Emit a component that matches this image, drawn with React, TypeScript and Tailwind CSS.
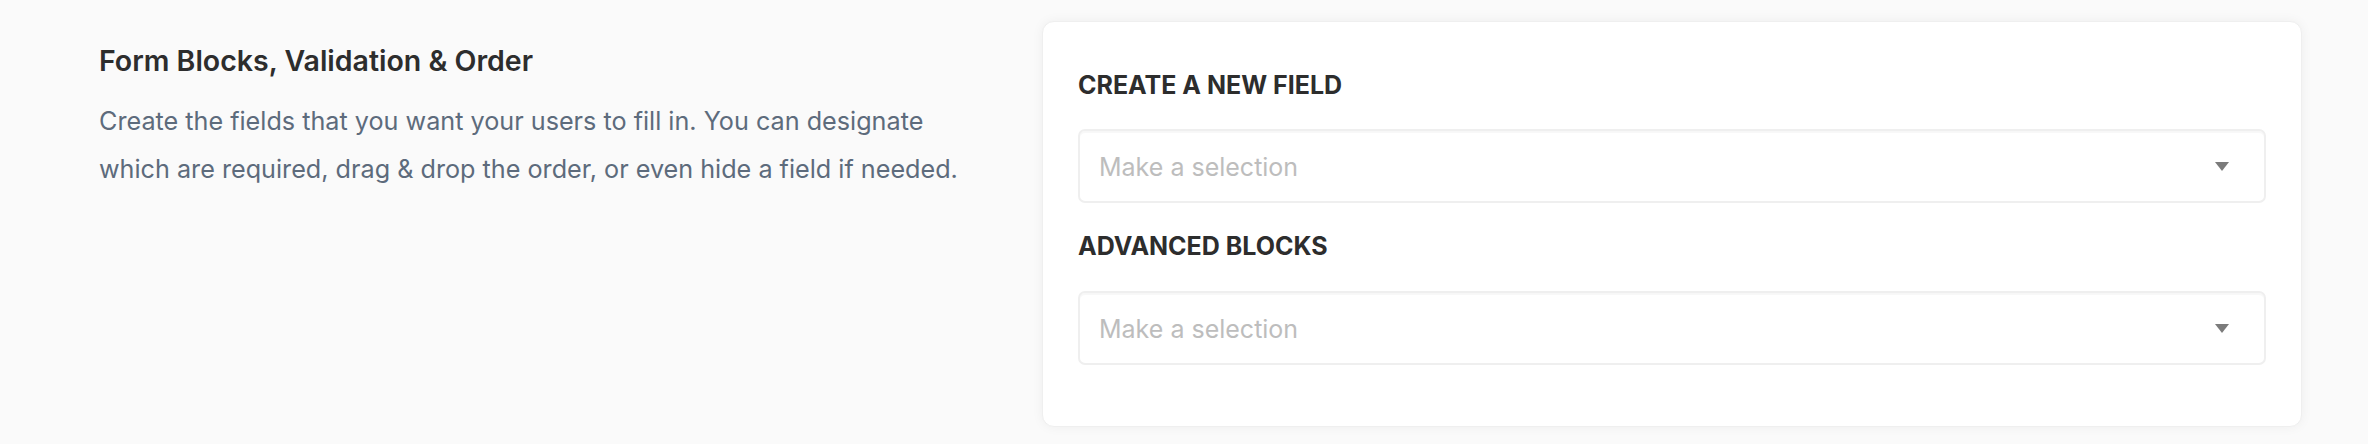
import React from "react"

const font = { fontFamily: "Inter, 'Noto Sans', sans-serif" }

function SelectBox({ placeholder }: { placeholder: string }) {
  return (
    <div className="flex h-[74px] items-center justify-between rounded-[7px] border-2 border-[#efefef] bg-white pl-[19px] pr-[35px] shadow-[inset_0_2px_1px_rgba(0,0,0,0.03)]">
      <span className="pt-[4px] text-[25px] text-[#bdbdbd]">{placeholder}</span>
      {/* Caret */}
      <svg width="14" height="9" viewBox="0 0 14 9">
        <path d="M0 0H14L7 9Z" fill="#7b7b7b" />
      </svg>
    </div>
  )
}

export default function App() {
  return (
    <div
      className="flex h-[444px] w-full bg-[#fafafa] pl-[99px] pr-[66px] pt-[21px]"
      style={font}
    >
      {/* Description */}
      <div className="flex-1 pt-[22px]">
        <h2 className="text-[28.5px] font-semibold leading-[36px] text-[#2d2d2d]">
          Form Blocks, Validation &amp; Order
        </h2>
        <p className="mt-[18px] max-w-[880px] text-[25.2px] leading-[48px] text-[#5d6b7c]">
          Create the fields that you want your users to fill in. You can designate
          which are required, drag &amp; drop the order, or even hide a field if needed.
        </p>
      </div>

      {/* Card */}
      <div className="h-[406px] w-[1260px] rounded-[12px] border border-[#efefef] bg-white px-[35px] pt-[47px] shadow-[0_0_12px_rgba(0,0,0,0.05)]">
        <p className="text-[25px] font-bold uppercase leading-[32px] text-[#2d2d2d]">
          Create a new field
        </p>
        <div className="mt-[28px]">
          <SelectBox placeholder="Make a selection" />
        </div>
        <p className="mt-[27px] text-[25px] font-bold uppercase leading-[32px] text-[#2d2d2d]">
          Advanced blocks
        </p>
        <div className="mt-[29px]">
          <SelectBox placeholder="Make a selection" />
        </div>
      </div>
    </div>
  )
}
